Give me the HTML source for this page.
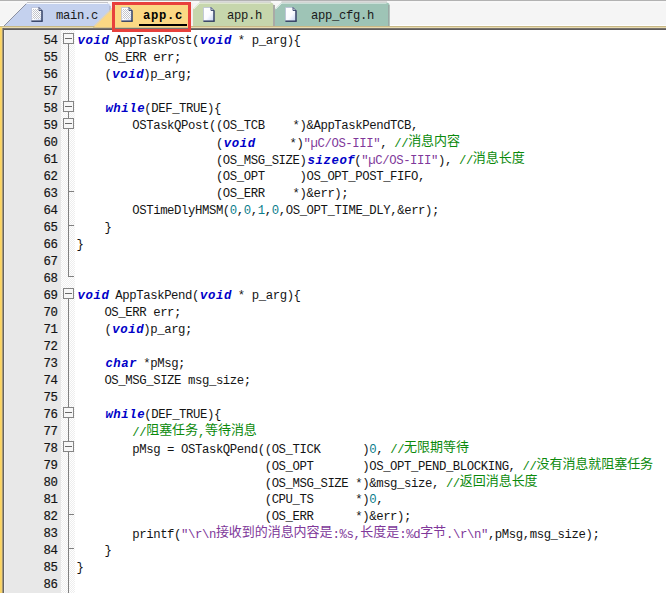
<!DOCTYPE html>
<html lang="zh">
<head>
<meta charset="utf-8">
<title>app.c</title>
<style>
html,body{margin:0;padding:0;}
body{width:666px;height:593px;overflow:hidden;position:relative;background:#fff;
 font-family:"Liberation Mono","Noto Sans CJK SC",monospace;}
#tabbar{position:absolute;left:0;top:0;width:666px;height:30px;background:#f5f5f5;}
#tabbar .topline{position:absolute;left:0;top:0;width:666px;height:1px;background:#b2b2b2;}
#tabbar .topline2{position:absolute;left:0;top:1px;width:666px;height:2px;background:#f8f8f8;}
#tabsvg{position:absolute;left:0;top:0;}
.tabtxt{position:absolute;top:7px;height:18px;line-height:18px;font-size:12.2px;letter-spacing:-0.32px;color:#1a1a1a;white-space:pre;}
.tabtxt.act{font-weight:bold;letter-spacing:0.68px;color:#000;}
.ico{position:absolute;}
#uline{position:absolute;left:139px;top:24px;width:48px;height:2px;background:#000;}
#redbox{position:absolute;left:112px;top:2px;width:73px;height:23.5px;border:3px solid #e8403c;}
#leftedge{position:absolute;left:0;top:28px;width:4px;height:565px;background:linear-gradient(to right,#fcd55e 0,#fcd55e 1px,#f5d272 1px,#f5d272 2px,#a89a72 2px,#a89a72 3px,#656363 3px,#656363 4px);}
#leftcorner{position:absolute;left:0;top:27px;width:2px;height:1px;background:#f6d873;}
#margin{position:absolute;left:4px;top:30px;width:57px;height:563px;background:linear-gradient(to right,#f0f0f0 0,#f0f0f0 1px,#e8e8e8 1px);}
#foldm{position:absolute;left:61px;top:30px;width:14px;height:563px;background-color:#f6f6f6;
 background-image:repeating-conic-gradient(#ffffff 0 25%,#eeeeee 0 50%);background-size:2px 2px;}
#foldsvg{position:absolute;left:0;top:0;}
#nums{position:absolute;left:3.5px;top:30px;width:54px;}
.nm{height:17px;line-height:23px;font-size:12.3px;letter-spacing:-0.41px;text-align:right;color:#151515;-webkit-text-stroke:0.2px;}
#code{position:absolute;left:76.5px;top:30px;}
.ln{height:17px;line-height:23px;font-size:12.3px;letter-spacing:-0.41px;white-space:pre;color:#141414;}
.k{color:#0000c8;font-weight:bold;font-style:italic;letter-spacing:0.59px;position:relative;left:1px;}
.c{color:#0c8a0c;}
.s{color:#80389a;}
.n{color:#0b7d8c;}
.z{font-size:13px;letter-spacing:-0.05px;position:relative;top:-2px;}
</style>
</head>
<body>
<div id="tabbar">
<div class="topline"></div><div class="topline2"></div>
<svg id="tabsvg" width="666" height="30" viewBox="0 0 666 30">
<defs>
<linearGradient id="pg" x1="0" y1="0" x2="1" y2="1"><stop offset="0" stop-color="#ffffff"/><stop offset="0.55" stop-color="#fafbff"/><stop offset="1" stop-color="#c4d2f2"/></linearGradient>
<pattern id="dither" width="2" height="2" patternUnits="userSpaceOnUse"><rect width="2" height="2" fill="#ffffff"/><rect width="1" height="1" fill="#c2c4cc"/><rect x="1" y="1" width="1" height="1" fill="#c2c4cc"/></pattern>
</defs>
<!-- yellow band + dark line -->
<rect x="0" y="25" width="666" height="1" fill="#fefefe"/>
<rect x="0" y="26" width="666" height="1" fill="#c8b886"/>
<rect x="0" y="27" width="666" height="1" fill="#e8dbb0"/>
<rect x="0" y="28" width="666" height="1" fill="#79746e"/>
<rect x="0" y="29" width="666" height="1" fill="#5f5c5c"/>
<!-- app_cfg.h tab -->
<path d="M275 26 V9 L281.5 2.5 H386 Q389.5 2.5 389.5 5 V26 Z" fill="#9ec4b6"/>
<path d="M275.5 9.2 L281.7 3 H386.500" stroke="#f4faf7" stroke-width="1" fill="none"/>
<path d="M281.500 2 H387" stroke="#bdbdbd" stroke-width="1" fill="none"/>
<rect x="388" y="5" width="1.500" height="21" fill="#9aa8a4"/>
<!-- app.h tab -->
<rect x="191" y="3" width="2" height="23" fill="#f4efef"/>
<path d="M193 26 V9 L199.5 2.5 H270 Q273.5 2.5 273.5 5 V26 Z" fill="#c6d6ac"/>
<path d="M193.5 9.2 L199.7 3 H270.500" stroke="#f6f9f0" stroke-width="1" fill="none"/>
<path d="M199.500 2 H271" stroke="#bdbdbd" stroke-width="1" fill="none"/>
<rect x="273" y="5" width="2" height="21" fill="#a9aaa6"/>
<!-- main.c tab -->
<path d="M4 26 L26.5 3.5 H107 Q110.500 3.5 110.500 7 V26 Z" fill="#c4d1ee"/>
<path d="M4 26 L26.5 3.5" stroke="#8b90a0" stroke-width="1" fill="none"/>
<path d="M26.5 3.500 H107" stroke="#f4f7fd" stroke-width="1" fill="none"/>
<path d="M27 2.500 H108" stroke="#c4c4c8" stroke-width="1" fill="none"/>
<path d="M110 6 V12" stroke="#a2abc2" stroke-width="1" fill="none"/>
<!-- app.c tab (active) -->
<path d="M93 28 L117.5 3.5 H188 Q191 3.5 191 7 V28 Z" fill="#fbd884"/>
<path d="M94 26 L117 3.500" stroke="#e6d6b0" stroke-width="1" fill="none"/>
<rect x="93" y="27" width="98" height="1" fill="#d8c48c"/>
</svg>
<svg class="ico" style="left:31px;top:7px" width="13" height="16" viewBox="0 0 13 16">
<path d="M0.5 0.5 H8 L11 3.5 V14 H0.5 Z" fill="url(#pg)" stroke="#b4bcd6" stroke-width="0.7"/>
<path d="M1.5 2 H7.5 V4.5 H9.5 V12 H1.5 Z" fill="url(#dither)"/>
<path d="M8 0.5 V3.5 H11 Z" fill="#ffffff" stroke="#34426a" stroke-width="0.9" stroke-linejoin="round"/>
<path d="M11 3.5 V14.2" fill="none" stroke="#2f3c60" stroke-width="1.4"/>
<path d="M0.4 14.2 H11.7" fill="none" stroke="#2f3c60" stroke-width="1.4"/>
</svg>
<svg class="ico" style="left:121px;top:7px" width="13" height="16" viewBox="0 0 13 16">
<path d="M0.5 0.5 H8 L11 3.5 V14 H0.5 Z" fill="url(#pg)" stroke="#b4bcd6" stroke-width="0.7"/>
<path d="M1.5 2 H7.5 V4.5 H9.5 V12 H1.5 Z" fill="url(#dither)"/>
<path d="M8 0.5 V3.5 H11 Z" fill="#ffffff" stroke="#34426a" stroke-width="0.9" stroke-linejoin="round"/>
<path d="M11 3.5 V14.2" fill="none" stroke="#2f3c60" stroke-width="1.4"/>
<path d="M0.4 14.2 H11.7" fill="none" stroke="#2f3c60" stroke-width="1.4"/>
</svg>
<svg class="ico" style="left:203px;top:7px" width="13" height="16" viewBox="0 0 13 16">
<path d="M0.5 0.5 H8 L11 3.5 V14 H0.5 Z" fill="url(#pg)" stroke="#b4bcd6" stroke-width="0.7"/>

<path d="M8 0.5 V3.5 H11 Z" fill="#ffffff" stroke="#34426a" stroke-width="0.9" stroke-linejoin="round"/>
<path d="M11 3.5 V14.2" fill="none" stroke="#2f3c60" stroke-width="1.4"/>
<path d="M0.4 14.2 H11.7" fill="none" stroke="#2f3c60" stroke-width="1.4"/>
</svg>
<svg class="ico" style="left:285px;top:7px" width="13" height="16" viewBox="0 0 13 16">
<path d="M0.5 0.5 H8 L11 3.5 V14 H0.5 Z" fill="url(#pg)" stroke="#b4bcd6" stroke-width="0.7"/>

<path d="M8 0.5 V3.5 H11 Z" fill="#ffffff" stroke="#34426a" stroke-width="0.9" stroke-linejoin="round"/>
<path d="M11 3.5 V14.2" fill="none" stroke="#2f3c60" stroke-width="1.4"/>
<path d="M0.4 14.2 H11.7" fill="none" stroke="#2f3c60" stroke-width="1.4"/>
</svg>
<div class="tabtxt" style="left:56px">main.c</div>
<div class="tabtxt act" style="left:143px">app.c</div>
<div class="tabtxt" style="left:227px">app.h</div>
<div class="tabtxt" style="left:311px">app_cfg.h</div>
<div id="uline"></div>
</div>
<div id="leftedge"></div><div id="leftcorner"></div>
<div id="margin"></div>
<div id="foldm"></div>
<svg id="foldsvg" width="100" height="593" viewBox="0 0 100 593">
<rect x="68" y="38" width="1" height="239" fill="#808080"/>
<rect x="68" y="293" width="1" height="300" fill="#808080"/>
<rect x="68" y="191" width="6" height="1" fill="#808080"/>
<rect x="68" y="225" width="6" height="1" fill="#808080"/>
<rect x="68" y="514" width="6" height="1" fill="#808080"/>
<rect x="68" y="548" width="6" height="1" fill="#808080"/>
<rect x="68" y="276" width="6" height="1" fill="#808080"/>
<rect x="63.5" y="33.5" width="10" height="10" fill="#f7f7f7" stroke="#858585" stroke-width="1"/>
<rect x="65" y="38" width="7" height="1" fill="#6a6a6a"/>
<rect x="63.5" y="101.5" width="10" height="10" fill="#f7f7f7" stroke="#858585" stroke-width="1"/>
<rect x="65" y="106" width="7" height="1" fill="#6a6a6a"/>
<rect x="63.5" y="118.5" width="10" height="10" fill="#f7f7f7" stroke="#858585" stroke-width="1"/>
<rect x="65" y="123" width="7" height="1" fill="#6a6a6a"/>
<rect x="63.5" y="288.5" width="10" height="10" fill="#f7f7f7" stroke="#858585" stroke-width="1"/>
<rect x="65" y="293" width="7" height="1" fill="#6a6a6a"/>
<rect x="63.5" y="407.5" width="10" height="10" fill="#f7f7f7" stroke="#858585" stroke-width="1"/>
<rect x="65" y="412" width="7" height="1" fill="#6a6a6a"/>
<rect x="63.5" y="441.5" width="10" height="10" fill="#f7f7f7" stroke="#858585" stroke-width="1"/>
<rect x="65" y="446" width="7" height="1" fill="#6a6a6a"/>
</svg>
<div id="nums">
<div class="nm">54</div>
<div class="nm">55</div>
<div class="nm">56</div>
<div class="nm">57</div>
<div class="nm">58</div>
<div class="nm">59</div>
<div class="nm">60</div>
<div class="nm">61</div>
<div class="nm">62</div>
<div class="nm">63</div>
<div class="nm">64</div>
<div class="nm">65</div>
<div class="nm">66</div>
<div class="nm">67</div>
<div class="nm">68</div>
<div class="nm">69</div>
<div class="nm">70</div>
<div class="nm">71</div>
<div class="nm">72</div>
<div class="nm">73</div>
<div class="nm">74</div>
<div class="nm">75</div>
<div class="nm">76</div>
<div class="nm">77</div>
<div class="nm">78</div>
<div class="nm">79</div>
<div class="nm">80</div>
<div class="nm">81</div>
<div class="nm">82</div>
<div class="nm">83</div>
<div class="nm">84</div>
<div class="nm">85</div>
<div class="nm">86</div>
</div>
<div id="code">
<div class="ln"><span class="k">void</span> AppTaskPost(<span class="k">void</span> * p_arg){</div>
<div class="ln">    OS_ERR err;</div>
<div class="ln">    (<span class="k">void</span>)p_arg;</div>
<div class="ln"></div>
<div class="ln">    <span class="k">while</span>(DEF_TRUE){</div>
<div class="ln">        OSTaskQPost((OS_TCB    *)&amp;AppTaskPendTCB,</div>
<div class="ln">                    (<span class="k">void</span>     *)<span class="s">"µC/OS-III"</span>, <span class="c">//<span class="z">消息内容</span></span></div>
<div class="ln">                    (OS_MSG_SIZE)<span class="k">sizeof</span>(<span class="s">"µC/OS-III"</span>), <span class="c">//<span class="z">消息长度</span></span></div>
<div class="ln">                    (OS_OPT     )OS_OPT_POST_FIFO,</div>
<div class="ln">                    (OS_ERR    *)&amp;err);</div>
<div class="ln">        OSTimeDlyHMSM(<span class="n">0</span>,<span class="n">0</span>,<span class="n">1</span>,<span class="n">0</span>,OS_OPT_TIME_DLY,&amp;err);</div>
<div class="ln">    }</div>
<div class="ln">}</div>
<div class="ln"></div>
<div class="ln"></div>
<div class="ln"><span class="k">void</span> AppTaskPend(<span class="k">void</span> * p_arg){</div>
<div class="ln">    OS_ERR err;</div>
<div class="ln">    (<span class="k">void</span>)p_arg;</div>
<div class="ln"></div>
<div class="ln">    <span class="k">char</span> *pMsg;</div>
<div class="ln">    OS_MSG_SIZE msg_size;</div>
<div class="ln"></div>
<div class="ln">    <span class="k">while</span>(DEF_TRUE){</div>
<div class="ln">        <span class="c">//<span class="z">阻塞任务</span>,<span class="z">等待消息</span></span></div>
<div class="ln">        pMsg = OSTaskQPend((OS_TICK      )<span class="n">0</span>, <span class="c">//<span class="z">无限期等待</span></span></div>
<div class="ln">                           (OS_OPT       )OS_OPT_PEND_BLOCKING, <span class="c">//<span class="z">没有消息就阻塞任务</span></span></div>
<div class="ln">                           (OS_MSG_SIZE *)&amp;msg_size, <span class="c">//<span class="z">返回消息长度</span></span></div>
<div class="ln">                           (CPU_TS      *)<span class="n">0</span>,</div>
<div class="ln">                           (OS_ERR      *)&amp;err);</div>
<div class="ln">        printf(<span class="s">"\r\n<span class="z">接收到的消息内容是</span>:%s,<span class="z">长度是</span>:%d<span class="z">字节</span>.\r\n"</span>,pMsg,msg_size);</div>
<div class="ln">    }</div>
<div class="ln">}</div>
<div class="ln"></div>
</div>
<div id="redbox"></div>
</body>
</html>
